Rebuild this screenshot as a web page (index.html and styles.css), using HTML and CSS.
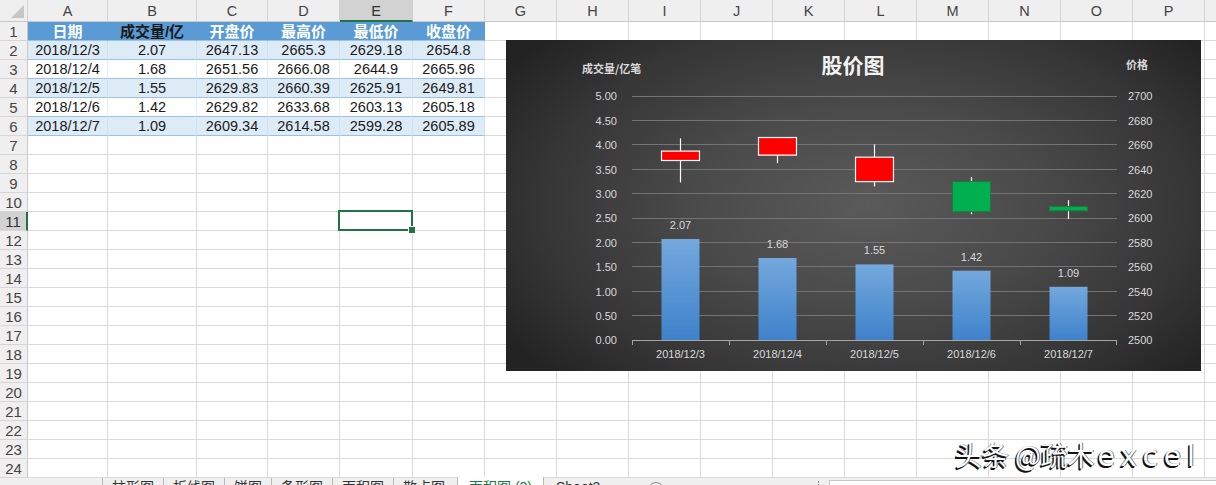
FILE: index.html
```html
<!DOCTYPE html>
<html lang="zh-CN">
<head>
<meta charset="utf-8">
<title>股价图</title>
<link rel="stylesheet" href="styles.css">
</head>
<body>
<div class="page">
  <div class="sheet">
    <div class="row head">
      <span class="corner"></span><span>A</span><span>B</span><span>C</span><span>D</span><span class="selcol">E</span><span>F</span><span>G</span><span>H</span><span>I</span><span>J</span><span>K</span><span>L</span><span>M</span><span>N</span><span>O</span><span>P</span><span></span>
    </div>
    <div class="row th">
      <b class="rh">1</b><span class="w">日期</span><span class="k">成交量/亿</span><span class="w">开盘价</span><span class="w">最高价</span><span class="w">最低价</span><span class="w">收盘价</span><span></span><span></span><span></span><span></span><span></span><span></span><span></span><span></span><span></span><span></span><span></span>
    </div>
    <div class="row band">
      <b class="rh">2</b><span class="d">2018/12/3</span><span class="d">2.07</span><span class="d">2647.13</span><span class="d">2665.3</span><span class="d">2629.18</span><span class="d">2654.8</span><span></span><span></span><span></span><span></span><span></span><span></span><span></span><span></span><span></span><span></span><span></span>
    </div>
    <div class="row plain">
      <b class="rh">3</b><span class="d">2018/12/4</span><span class="d">1.68</span><span class="d">2651.56</span><span class="d">2666.08</span><span class="d">2644.9</span><span class="d">2665.96</span><span></span><span></span><span></span><span></span><span></span><span></span><span></span><span></span><span></span><span></span><span></span>
    </div>
    <div class="row band">
      <b class="rh">4</b><span class="d">2018/12/5</span><span class="d">1.55</span><span class="d">2629.83</span><span class="d">2660.39</span><span class="d">2625.91</span><span class="d">2649.81</span><span></span><span></span><span></span><span></span><span></span><span></span><span></span><span></span><span></span><span></span><span></span>
    </div>
    <div class="row plain">
      <b class="rh">5</b><span class="d">2018/12/6</span><span class="d">1.42</span><span class="d">2629.82</span><span class="d">2633.68</span><span class="d">2603.13</span><span class="d">2605.18</span><span></span><span></span><span></span><span></span><span></span><span></span><span></span><span></span><span></span><span></span><span></span>
    </div>
    <div class="row band">
      <b class="rh">6</b><span class="d">2018/12/7</span><span class="d">1.09</span><span class="d">2609.34</span><span class="d">2614.58</span><span class="d">2599.28</span><span class="d">2605.89</span><span></span><span></span><span></span><span></span><span></span><span></span><span></span><span></span><span></span><span></span><span></span>
    </div>
    <div class="row"><b class="rh">7</b><span></span><span></span><span></span><span></span><span></span><span></span><span></span><span></span><span></span><span></span><span></span><span></span><span></span><span></span><span></span><span></span><span></span></div>
    <div class="row"><b class="rh">8</b><span></span><span></span><span></span><span></span><span></span><span></span><span></span><span></span><span></span><span></span><span></span><span></span><span></span><span></span><span></span><span></span><span></span></div>
    <div class="row"><b class="rh">9</b><span></span><span></span><span></span><span></span><span></span><span></span><span></span><span></span><span></span><span></span><span></span><span></span><span></span><span></span><span></span><span></span><span></span></div>
    <div class="row"><b class="rh">10</b><span></span><span></span><span></span><span></span><span></span><span></span><span></span><span></span><span></span><span></span><span></span><span></span><span></span><span></span><span></span><span></span><span></span></div>
    <div class="row"><b class="rh selrow">11</b><span></span><span></span><span></span><span></span><span class="sel"></span><span></span><span></span><span></span><span></span><span></span><span></span><span></span><span></span><span></span><span></span><span></span><span></span></div>
    <div class="row"><b class="rh">12</b><span></span><span></span><span></span><span></span><span></span><span></span><span></span><span></span><span></span><span></span><span></span><span></span><span></span><span></span><span></span><span></span><span></span></div>
    <div class="row"><b class="rh">13</b><span></span><span></span><span></span><span></span><span></span><span></span><span></span><span></span><span></span><span></span><span></span><span></span><span></span><span></span><span></span><span></span><span></span></div>
    <div class="row"><b class="rh">14</b><span></span><span></span><span></span><span></span><span></span><span></span><span></span><span></span><span></span><span></span><span></span><span></span><span></span><span></span><span></span><span></span><span></span></div>
    <div class="row"><b class="rh">15</b><span></span><span></span><span></span><span></span><span></span><span></span><span></span><span></span><span></span><span></span><span></span><span></span><span></span><span></span><span></span><span></span><span></span></div>
    <div class="row"><b class="rh">16</b><span></span><span></span><span></span><span></span><span></span><span></span><span></span><span></span><span></span><span></span><span></span><span></span><span></span><span></span><span></span><span></span><span></span></div>
    <div class="row"><b class="rh">17</b><span></span><span></span><span></span><span></span><span></span><span></span><span></span><span></span><span></span><span></span><span></span><span></span><span></span><span></span><span></span><span></span><span></span></div>
    <div class="row"><b class="rh">18</b><span></span><span></span><span></span><span></span><span></span><span></span><span></span><span></span><span></span><span></span><span></span><span></span><span></span><span></span><span></span><span></span><span></span></div>
    <div class="row"><b class="rh">19</b><span></span><span></span><span></span><span></span><span></span><span></span><span></span><span></span><span></span><span></span><span></span><span></span><span></span><span></span><span></span><span></span><span></span></div>
    <div class="row"><b class="rh">20</b><span></span><span></span><span></span><span></span><span></span><span></span><span></span><span></span><span></span><span></span><span></span><span></span><span></span><span></span><span></span><span></span><span></span></div>
    <div class="row"><b class="rh">21</b><span></span><span></span><span></span><span></span><span></span><span></span><span></span><span></span><span></span><span></span><span></span><span></span><span></span><span></span><span></span><span></span><span></span></div>
    <div class="row"><b class="rh">22</b><span></span><span></span><span></span><span></span><span></span><span></span><span></span><span></span><span></span><span></span><span></span><span></span><span></span><span></span><span></span><span></span><span></span></div>
    <div class="row"><b class="rh">23</b><span></span><span></span><span></span><span></span><span></span><span></span><span></span><span></span><span></span><span></span><span></span><span></span><span></span><span></span><span></span><span></span><span></span></div>
    <div class="row"><b class="rh">24</b><span></span><span></span><span></span><span></span><span></span><span></span><span></span><span></span><span></span><span></span><span></span><span></span><span></span><span></span><span></span><span></span><span></span></div>
  </div>

  <div class="tabs">
    <div class="tab-nav"></div>
    <div class="tab">柱形图</div>
    <div class="tab">折线图</div>
    <div class="tab">饼图</div>
    <div class="tab">条形图</div>
    <div class="tab">面积图</div>
    <div class="tab">散点图</div>
    <div class="tab active">面积图 (2)</div>
    <div class="tab">Sheet3</div>
    <div class="tab-add"></div>
    <div class="tab-split"></div>
    <div class="hscroll"></div>
  </div>

  <div class="chart">
    <svg class="plot" width="695" height="331" viewBox="0 0 695 331">
      <defs>
        <linearGradient id="bar" x1="0" y1="0" x2="0" y2="1">
          <stop offset="0" stop-color="#74a8dd"/>
          <stop offset="1" stop-color="#3e82cb"/>
        </linearGradient>
      </defs>
      <text class="title" x="347" y="33" text-anchor="middle">股价图</text>
      <text class="axt" x="76" y="33">成交量/亿笔</text>
      <text class="axt" x="620" y="29">价格</text>

      <g class="grid">
        <line x1="126" x2="611" y1="56.5" y2="56.5"/>
        <line x1="126" x2="611" y1="80.5" y2="80.5"/>
        <line x1="126" x2="611" y1="104.5" y2="104.5"/>
        <line x1="126" x2="611" y1="129.5" y2="129.5"/>
        <line x1="126" x2="611" y1="153.5" y2="153.5"/>
        <line x1="126" x2="611" y1="178.5" y2="178.5"/>
        <line x1="126" x2="611" y1="202.5" y2="202.5"/>
        <line x1="126" x2="611" y1="226.5" y2="226.5"/>
        <line x1="126" x2="611" y1="251.5" y2="251.5"/>
        <line x1="126" x2="611" y1="275.5" y2="275.5"/>
      </g>

      <g class="lbl" text-anchor="end">
        <text x="111" y="60">5.00</text>
        <text x="111" y="84.5">4.50</text>
        <text x="111" y="109">4.00</text>
        <text x="111" y="133.5">3.50</text>
        <text x="111" y="158">3.00</text>
        <text x="111" y="182">2.50</text>
        <text x="111" y="206.5">2.00</text>
        <text x="111" y="231">1.50</text>
        <text x="111" y="255.5">1.00</text>
        <text x="111" y="280">0.50</text>
        <text x="111" y="304">0.00</text>
      </g>
      <g class="lbl">
        <text x="622" y="60">2700</text>
        <text x="622" y="84.5">2680</text>
        <text x="622" y="109">2660</text>
        <text x="622" y="133.5">2640</text>
        <text x="622" y="158">2620</text>
        <text x="622" y="182">2600</text>
        <text x="622" y="206.5">2580</text>
        <text x="622" y="231">2560</text>
        <text x="622" y="255.5">2540</text>
        <text x="622" y="280">2520</text>
        <text x="622" y="304">2500</text>
      </g>

      <g class="bars" fill="url(#bar)">
        <rect x="155.5" y="199" width="38" height="101"/>
        <rect x="252.5" y="218" width="38" height="82"/>
        <rect x="349.5" y="224.4" width="38" height="75.6"/>
        <rect x="446.5" y="230.7" width="38" height="69.3"/>
        <rect x="543.5" y="246.8" width="38" height="53.2"/>
      </g>
      <g class="lbl" text-anchor="middle">
        <text x="174.5" y="189">2.07</text>
        <text x="271.5" y="208">1.68</text>
        <text x="368.5" y="214.4">1.55</text>
        <text x="465.5" y="220.7">1.42</text>
        <text x="562.5" y="236.8">1.09</text>
      </g>

      <g class="axis">
        <line x1="126" x2="611" y1="300.5" y2="300.5"/>
        <line x1="126.5" x2="126.5" y1="300" y2="305"/>
        <line x1="223.5" x2="223.5" y1="300" y2="305"/>
        <line x1="320.5" x2="320.5" y1="300" y2="305"/>
        <line x1="417.5" x2="417.5" y1="300" y2="305"/>
        <line x1="514.5" x2="514.5" y1="300" y2="305"/>
        <line x1="610.5" x2="610.5" y1="300" y2="305"/>
      </g>
      <g class="lbl" text-anchor="middle">
        <text x="174.5" y="318">2018/12/3</text>
        <text x="271.5" y="318">2018/12/4</text>
        <text x="368.5" y="318">2018/12/5</text>
        <text x="465.5" y="318">2018/12/6</text>
        <text x="562.5" y="318">2018/12/7</text>
      </g>

      <g class="wick">
        <line x1="174.5" x2="174.5" y1="98.3" y2="142.4"/>
        <line x1="271.5" x2="271.5" y1="97.4" y2="123.2"/>
        <line x1="368.5" x2="368.5" y1="104.3" y2="146.4"/>
        <line x1="465.5" x2="465.5" y1="136.9" y2="174.2"/>
        <line x1="562.5" x2="562.5" y1="160.2" y2="178.9"/>
      </g>
      <g class="up">
        <rect x="155.5" y="111.1" width="38" height="9.4"/>
        <rect x="252.5" y="97.5" width="38" height="17.6"/>
        <rect x="349.5" y="117.2" width="38" height="24.4"/>
      </g>
      <g class="down">
        <rect x="446.5" y="141.6" width="38" height="30.1"/>
        <rect x="543.5" y="166.6" width="38" height="4.2"/>
      </g>
    </svg>
  </div>

  <div class="mark">头条 @疏木<span class="latin">excel</span></div>
</div>
</body>
</html>
```

FILE: styles.css
```css
* { box-sizing: border-box; }

html, body {
  margin: 0;
  padding: 0;
  background: #ffffff;
}

.page {
  position: relative;
  width: 1216px;
  height: 485px;
  overflow: hidden;
  font-family: "Liberation Sans", "Noto Sans CJK SC", sans-serif;
  color: #1a1a1a;
}

.sheet {
  display: flex;
  flex-direction: column;
}

.row {
  display: grid;
  grid-template-columns: 28px 80px 89px 71px 72px 73px 72px repeat(10, 72px) 40px;
  height: 19px;
}

.row > span,
.row > b {
  display: flex;
  align-items: center;
  justify-content: center;
  border-right: 1px solid #dadada;
  border-bottom: 1px solid #dadada;
  font-size: 14.5px;
  font-weight: normal;
  white-space: nowrap;
  overflow: hidden;
  line-height: 1;
}

/* column header row */
.row.head {
  height: 22px;
}
.row.head > span {
  background: #efefef;
  border-right: 1px solid #d0d0d0;
  border-bottom: 1px solid #c8c8c8;
  color: #444;
  font-size: 14.5px;
  padding-top: 2px;
}
.row.head > .corner {
  position: relative;
  background: #efefef;
}
.row.head > .corner::after {
  content: "";
  position: absolute;
  right: 3px;
  bottom: 3px;
  width: 0;
  height: 0;
  border-left: 13px solid transparent;
  border-bottom: 13px solid #c6c6c6;
}
.row.head > .selcol {
  background: #d2d2d2;
  border-bottom: 2px solid #217346;
  color: #333;
}

/* row header */
.row > .rh {
  background: #efefef;
  border-right: 1px solid #c8c8c8;
  border-bottom: 1px solid #d6d6d6;
  color: #444;
  font-size: 15px;
  justify-content: center;
}
.row > .rh.selrow {
  background: #d2d2d2;
  border-right: 2px solid #217346;
  color: #333;
}

/* table header */
.row.th > .w,
.row.th > .k {
  background: #5b9bd5;
  border-right-color: #5b9bd5;
  border-bottom-color: #9bc2e6;
  font-weight: bold;
  font-size: 15px;
}
.row.th > .w { color: #ffffff; }
.row.th > .k { color: #1a1a1a; }

.row.band > .d {
  background: #ddebf7;
  border-right-color: #d3e3f2;
  border-bottom-color: #9bc2e6;
}
.row.plain > .d {
  background: #ffffff;
  border-right-color: #e6eef7;
  border-bottom-color: #9bc2e6;
}

/* selected cell */
.row > .sel {
  position: relative;
  overflow: visible;
}
.row > .sel::after {
  content: "";
  position: absolute;
  left: -2px;
  top: -2px;
  right: -1px;
  bottom: -1px;
  border: 2px solid #217346;
}
.row > .sel::before {
  content: "";
  position: absolute;
  right: -4px;
  bottom: -4px;
  width: 6px;
  height: 6px;
  background: #217346;
  border: 1px solid #ffffff;
  z-index: 1;
}

/* sheet tabs */
.tabs {
  display: flex;
  height: 30px;
  margin-top: -1px;
  background: #f0f0f0;
  border-top: 1px solid #c6c6c6;
  font-size: 14px;
  line-height: 16px;
  color: #333;
}
.tab-nav {
  width: 102px;
}
.tab {
  padding: 1px 9px 0;
  border-left: 1px solid #b8b8b8;
  white-space: nowrap;
}
.tab.active {
  background: #ffffff;
  color: #217346;
  border-left: 1px solid #b8b8b8;
  border-right: 1px solid #b8b8b8;
  margin-top: -1px;
  margin-left: 3px;
  padding: 2px 11px 0;
}
.tab.active + .tab {
  border-left: none;
  padding-left: 12px;
  padding-right: 14px;
}
.tab-add {
  width: 16px;
  height: 16px;
  margin: 4px 0 0 34px;
  border: 1px solid #888;
  border-radius: 50%;
}
.tab-split {
  width: 3px;
  height: 12px;
  margin: 3px 0 0 154px;
  border-left: 1px dotted #888;
}
.hscroll {
  flex: 1;
  margin: 2px 0 0 8px;
  background: #ffffff;
  border-left: 1px solid #c6c6c6;
  border-top: 1px solid #c6c6c6;
}

/* chart */
.chart {
  position: absolute;
  left: 506px;
  top: 40px;
  width: 695px;
  height: 331px;
  background: radial-gradient(ellipse 62% 75% at 52% 50%, #5a5a5a 0%, #4a4a4a 40%, #363636 75%, #232323 100%);
}
.plot {
  display: block;
  font-family: "Liberation Sans", "Noto Sans CJK SC", sans-serif;
}
.title {
  fill: #f2f2f2;
  font-size: 21px;
  font-weight: bold;
  font-family: "Noto Sans CJK SC", sans-serif;
}
.axt {
  fill: #d9d9d9;
  font-size: 11px;
  font-weight: bold;
  font-family: "Noto Sans CJK SC", sans-serif;
}
.lbl {
  fill: #d9d9d9;
  font-size: 11px;
}
.grid line {
  stroke: #747474;
  stroke-width: 1;
}
.axis line {
  stroke: #a6a6a6;
  stroke-width: 1;
}
.wick line {
  stroke: #ffffff;
  stroke-width: 1.2;
}
.up rect {
  fill: #ff0000;
  stroke: #ffffff;
  stroke-width: 1.2;
}
.down rect {
  fill: #00b050;
  stroke: #1e7a3c;
  stroke-width: 1;
}

/* watermark */
.mark {
  position: absolute;
  left: 955px;
  top: 439px;
  font-family: "Noto Sans CJK SC", sans-serif;
  font-size: 27px;
  line-height: 32px;
  color: #ffffff;
  white-space: nowrap;
  text-shadow: -1.5px 1.5px 0 #111, -1px 1px 1px #222, 1px 0 0 #777;
}
.mark .latin {
  font-family: "DejaVu Sans", sans-serif;
  font-size: 28px;
  letter-spacing: 6px;
  margin-left: 3px;
}
```
